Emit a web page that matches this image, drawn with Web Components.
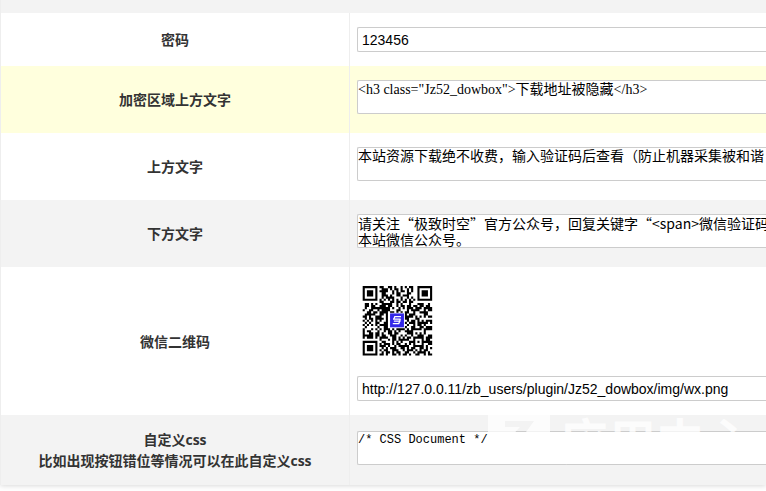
<!DOCTYPE html>
<html lang="zh-CN">
<head>
<meta charset="utf-8">
<title>Jz52_dowbox</title>
<style>
  body {
    margin: 0;
    min-height: 100vh;
    background: #fff;
    color: #333;
    font: 14px/21px "Open Sans", "Noto Sans CJK SC", sans-serif;
  }
</style>
</head>
<body>
<settings-panel>
  <setting-row label="密码" kind="text" value="123456"></setting-row>
  <setting-row class="active" label="加密区域上方文字" kind="area" value="&lt;h3 class=&quot;Jz52_dowbox&quot;&gt;下载地址被隐藏&lt;/h3&gt;"></setting-row>
  <setting-row label="上方文字" kind="area" value="本站资源下载绝不收费，输入验证码后查看（防止机器采集被和谐"></setting-row>
  <setting-row class="even cjk" label="下方文字" kind="area" value="请关注“极致时空”官方公众号，回复关键字“&lt;span&gt;微信验证码&#10;本站微信公众号。"></setting-row>
  <setting-row label="微信二维码" kind="text" value="http://127.0.0.11/zb_users/plugin/Jz52_dowbox/img/wx.png"><qr-code></qr-code></setting-row>
  <setting-row class="even code" label="自定义css&#10;比如出现按钮错位等情况可以在此自定义css" kind="area" value="/* CSS Document */"></setting-row>
</settings-panel>
<water-mark>应用中心</water-mark>

<script>
class SettingsPanel extends HTMLElement {
  constructor() {
    super()
    let shadow = this.attachShadow({ mode: 'open' })
    shadow.innerHTML = `
    <style>
    :host{
        display:block;
        box-sizing:border-box;
        border-left:1px solid #eee;
        box-shadow:0 0 6px rgba(0, 0, 0, 0.2);
    }
    .head{
        height:13px;
        background:#f3f3f3;
    }
    </style>
    <div class="head"></div>
    <slot></slot>
    `
  }
}

class SettingRow extends HTMLElement {
  constructor() {
    super()
    this.attachShadow({ mode: 'open' })
  }

  connectedCallback() {
    let kind = this.getAttribute('kind')

    this.shadowRoot.innerHTML = `
    <style>
    :host{
        display:grid;
        grid-template-columns:349px minmax(0, 1fr);
        background:#fff;
    }
    :host(.active){
        background:#ffffdd;
    }
    :host(.even){
        background:#f3f3f3;
    }
    .name{
        display:flex;
        align-items:center;
        justify-content:center;
        box-sizing:border-box;
        border-right:1px solid #eee;
        padding:14px 8px;
        text-align:center;
        font-weight:bold;
        white-space:pre-line;
    }
    .field{
        display:flex;
        flex-direction:column;
        justify-content:center;
        padding:14px 0 14px 7px;
    }
    input, textarea{
        display:block;
        width:100%;
        box-sizing:border-box;
        border:1px solid #ccc;
        border-right:0;
        border-radius:2px 0 0 2px;
        background:#fff;
        color:#000;
        outline:none;
    }
    input{
        height:25px;
        padding:0 4px;
        font:14px "Liberation Sans", sans-serif;
    }
    textarea{
        height:34px;
        margin:0 0 5px;
        padding:0;
        resize:none;
        overflow:hidden;
        white-space:pre;
        font:14px/18px "Liberation Serif", "Noto Sans CJK SC", serif;
    }
    :host(.cjk) textarea{
        font:14px/16px "Noto Sans CJK SC", sans-serif;
    }
    :host(.code) textarea{
        font:12px/16px "Liberation Mono", monospace;
    }
    </style>
    <div class="name"><label for="control"></label></div>
    <div class="field">
        <slot></slot>
        ${kind === 'area' ? '<textarea id="control" spellcheck="false"></textarea>' : '<input id="control" type="text">'}
    </div>
    `
    this.shadowRoot.querySelector('label').textContent = this.getAttribute('label')
    this.shadowRoot.getElementById('control').value = this.getAttribute('value')
  }
}

class QrCode extends HTMLElement {
  constructor() {
    super()
    let shadow = this.attachShadow({ mode: 'open' })
    const rows = [
      '#######.##..##.#..#.#.##..#######',
      '#.....#..###.#.##.#..#.#..#.....#',
      '#.###.#.####..#.#.##.#.#..#.###.#',
      '#.###.#..##...#.##...##...#.###.#',
      '#.###.#..###.#..##.###....#.###.#',
      '#.....#..#.####...#..#.#..#.....#',
      '#######.#.#.#.#.#.#.#.#.#.#######',
      '........##...##.##.##.##.........',
      '.##.#.#..#####..#.#...#...###..#.',
      '.##.##..###.##..#.##.##.##.##.##.',
      '.#..#########.#..#.#.###.###.####',
      '#..##..#.####...##...#.####..#.##',
      '..##.##.####.##.#.#.##..#..####..',
      '.#####..##.#........#.###....##..',
      '##.#..###..#........####.#.#.#.##',
      '.#.##.####.#........##...##......',
      '#.#.#.#.#..#.........#.##.#.#.###',
      '.#.#..##..##........#.###.#####.#',
      '#.#.#.#.####.........#..#.##.#...',
      '.#.....#..##........#..##..##.###',
      '#...#.#.#.###.#.####.#.#####.####',
      '#.##...#..#.##.#.#..####.....#...',
      '#..##.##.#..##.##....###.#.#.#...',
      '#####.##.##..###..#.#..#..###..##',
      '#.###.#.####..##.#.#.##.#####.###',
      '........#...#.##.#####..#...#.##.',
      '#######..##...#.#.#...###.#.#####',
      '#.....#.#.###.#.##..#.#.#...#..##',
      '#.###.#.###.#..#.#####..#####.#..',
      '#.###.#..#.#.###..##.#.##..##.#.#',
      '#.###.#.#.##..###..#.###.#.#.##..',
      '#.....#..#.##.#.##..##..#.####.#.',
      '#######.##.#..##.#.##.#..##..#.##'
    ]
    let d = ''
    rows.forEach((row, y) => {
      for (let x = 0; x < row.length; x++) {
        if (row[x] === '#') d += `M${x} ${y}h1v1h-1z`
      }
    })
    shadow.innerHTML = `
    <style>
    :host{
        display:block;
        margin-bottom:15px;
    }
    svg{
        display:block;
        width:80px;
        height:80px;
        background:#fff;
    }
    </style>
    <svg viewBox="-2.7 -2.4 38 38" role="img" aria-label="QR">
        <path d="${d}" fill="#000"/>
        <rect x="12.7" y="12.7" width="7.2" height="7.2" fill="#fff"/>
        <rect x="13" y="13" width="6.6" height="6.6" fill="#3327e8"/>
        <path d="M15.2 14.5h3M14.4 15.7h3.6M14.8 16.7h3.2M14.3 17.9h3M15.4 14.3l-.7 1.5M17.9 15.6l-.8 2.4" fill="none" stroke="#fff" stroke-width=".6"/>
    </svg>
    `
  }
}

class WaterMark extends HTMLElement {
  constructor() {
    super()
    let shadow = this.attachShadow({ mode: 'open' })
    shadow.innerHTML = `
    <style>
    :host{
        position:absolute;
        left:488px;
        top:398px;
        display:flex;
        align-items:flex-start;
        gap:10px;
        color:#fff;
        opacity:.75;
        pointer-events:none;
    }
    svg{
        display:block;
    }
    span{
        padding-top:16px;
        font:bold 48px/48px "Noto Sans CJK SC", sans-serif;
        white-space:nowrap;
    }
    </style>
    <svg width="62" height="64" viewBox="0 0 62 64" fill="#fff" aria-hidden="true">
        <path d="M0 14H62V64H0zM17 23V29H32L17 45V52H44V45H30L46 23z" fill-rule="evenodd"/>
    </svg>
    <span><slot></slot></span>
    `
  }
}

customElements.define('settings-panel', SettingsPanel)
customElements.define('setting-row', SettingRow)
customElements.define('qr-code', QrCode)
customElements.define('water-mark', WaterMark)
</script>
</body>
</html>
